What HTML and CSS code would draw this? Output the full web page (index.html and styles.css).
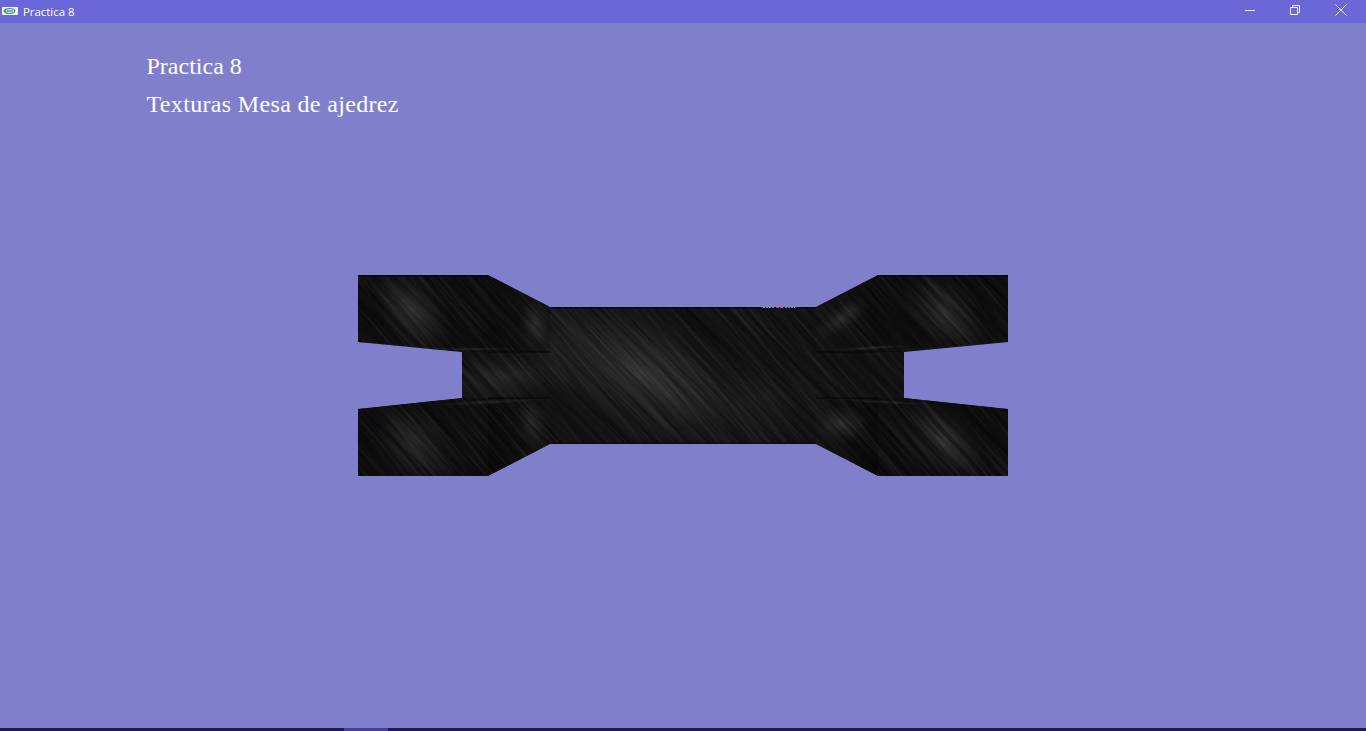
FILE: index.html
```html
<!DOCTYPE html>
<html lang="es">
<head>
<meta charset="utf-8">
<title>Practica 8</title>
<link rel="stylesheet" href="styles.css">
</head>
<body>
<div class="window">
  <header class="titlebar">
    <svg class="app-icon" viewBox="0 0 16 8" width="16" height="8" aria-hidden="true">
      <rect width="16" height="8" rx="1" fill="#f2f6f2"/>
      <ellipse cx="7.5" cy="4" rx="6" ry="3.1" fill="#3e9a8a"/>
      <ellipse cx="8" cy="4" rx="4" ry="1.9" fill="#dfe9ee"/>
      <path d="M5 4h6" stroke="#3c5a8c" stroke-width="1"/>
    </svg>
    <span class="app-title">Practica 8</span>
    <div class="controls">
      <span class="control"><svg viewBox="0 0 12 12" width="12" height="12"><path d="M1 6.5h10" class="glyph"/></svg></span>
      <span class="control"><svg viewBox="0 0 12 12" width="12" height="12"><path d="M1.5 3.5h7v7h-7zM3.5 3.5v-2h7v7h-2" class="glyph"/></svg></span>
      <span class="control"><svg viewBox="0 0 12 12" width="12" height="12"><path d="M.5 .5l11 11M11.5 .5l-11 11" class="glyph"/></svg></span>
    </div>
  </header>
  <main class="scene">
    <div class="caption">
      <p>Practica 8</p>
      <p class="caption-wide">Texturas Mesa de ajedrez</p>
    </div>
    <svg class="table" viewBox="358 275 650 201" width="650" height="201" aria-hidden="true">
      <defs>
        <filter id="grain" x="0" y="0" width="100%" height="100%" color-interpolation-filters="sRGB">
          <feTurbulence type="fractalNoise" baseFrequency="0.008 0.28" numOctaves="3" seed="7"/>
          <feColorMatrix type="matrix" values="0 0 0 0 0  0 0 0 0 0  0 0 0 0 0  2.4 0 0 0 -0.9"/>
        </filter>
        <filter id="grainLight" x="0" y="0" width="100%" height="100%" color-interpolation-filters="sRGB">
          <feTurbulence type="fractalNoise" baseFrequency="0.01 0.3" numOctaves="2" seed="21"/>
          <feColorMatrix type="matrix" values="0 0 0 0 1  0 0 0 0 1  0 0 0 0 1  1.8 0 0 0 -0.85"/>
        </filter>
        <radialGradient id="glow">
          <stop offset="0" stop-color="#363636" stop-opacity=".95"/>
          <stop offset=".5" stop-color="#2a2a2a" stop-opacity=".6"/>
          <stop offset="1" stop-color="#1c1c1c" stop-opacity="0"/>
        </radialGradient>
        <radialGradient id="glowSoft">
          <stop offset="0" stop-color="#303030" stop-opacity=".8"/>
          <stop offset="1" stop-color="#202020" stop-opacity="0"/>
        </radialGradient>
        <linearGradient id="sideL" x1="0" x2="1" y1="0" y2="0">
          <stop offset="0" stop-color="#0a0a0a"/>
          <stop offset="1" stop-color="#161616"/>
        </linearGradient>
        <linearGradient id="sideR" x1="1" x2="0" y1="0" y2="0">
          <stop offset="0" stop-color="#0a0a0a"/>
          <stop offset="1" stop-color="#171717"/>
        </linearGradient>
        <clipPath id="shape">
          <path d="M358 275H488L550 307H816L878 275H1008V342L904 352V398L1008 409V476H878L816 444H550L488 476H358V409L462 398V352L358 342Z"/>
        </clipPath>
      </defs>
      <g clip-path="url(#shape)">
        <rect class="base" x="358" y="275" width="650" height="201"/>
        <ellipse cx="640" cy="372" rx="160" ry="70" transform="rotate(25 640 372)" fill="url(#glow)"/>
        <ellipse cx="505" cy="376" rx="70" ry="26" fill="url(#glowSoft)"/>
        <ellipse cx="770" cy="395" rx="70" ry="45" fill="url(#glowSoft)" opacity=".3"/>

        <!-- upper left leg -->
        <path class="face" d="M358 275H488V350L358 342Z"/>
        <path fill="url(#sideL)" d="M488 275L550 307V352H462L488 350Z"/>
        <ellipse cx="412" cy="310" rx="55" ry="30" transform="rotate(50 412 310)" fill="url(#glow)"/>
        <ellipse cx="535" cy="325" rx="17" ry="28" fill="url(#glow)" opacity=".85"/>
        <ellipse cx="472" cy="349" rx="52" ry="2" fill="url(#glowSoft)"/>

        <!-- lower left leg -->
        <path class="face" d="M358 409L462 398H488V476H358Z"/>
        <path fill="url(#sideL)" d="M488 398H550V444L488 476Z"/>
        <ellipse cx="416" cy="442" rx="55" ry="30" transform="rotate(45 416 442)" fill="url(#glow)" opacity=".8"/>
        <ellipse cx="532" cy="423" rx="17" ry="28" transform="rotate(-12 532 423)" fill="url(#glow)" opacity=".75"/>
        <ellipse cx="490" cy="402" rx="60" ry="2.6" transform="rotate(-3 490 402)" fill="url(#glowSoft)"/>

        <!-- upper right leg -->
        <path class="face" d="M1008 275H878V350L1008 342Z"/>
        <path fill="url(#sideR)" d="M878 275L816 307V352H904L878 350Z"/>
        <ellipse cx="945" cy="312" rx="55" ry="30" transform="rotate(50 945 312)" fill="url(#glow)"/>
        <ellipse cx="842" cy="318" rx="36" ry="13" transform="rotate(-35 842 318)" fill="url(#glow)" opacity=".8"/>
        <ellipse cx="870" cy="348" rx="46" ry="2.2" transform="rotate(-3 870 348)" fill="url(#glow)" opacity=".8"/>

        <!-- lower right leg -->
        <path class="face" d="M1008 409L904 398H878V476H1008Z"/>
        <path fill="url(#sideR)" d="M878 398H816V444L878 476Z"/>
        <ellipse cx="945" cy="442" rx="55" ry="30" transform="rotate(45 945 442)" fill="url(#glow)"/>
        <ellipse cx="842" cy="424" rx="30" ry="20" fill="url(#glow)" opacity=".85"/>
        <ellipse cx="885" cy="402" rx="52" ry="2" transform="rotate(3 885 402)" fill="url(#glowSoft)"/>

        <!-- wood streaks: dark furrows and fine light fibres -->
        <rect class="furrows" x="-200" y="-200" width="1000" height="1000" filter="url(#grain)" transform="translate(683 -90) rotate(45)"/>
        <rect class="fibres" x="-200" y="-200" width="1000" height="1000" filter="url(#grainLight)" transform="translate(683 -90) rotate(50)"/>

        <path class="rim" d="M358 276H488M878 276H1008M550 308H816M550 443H816"/>
        <path class="ledge" d="M488 352H550M816 352H878M488 398H550M816 398H878"/>
      </g>
      <path class="spark" d="M763 307.5h12"/>
      <path class="spark-red" d="M776 307.5h8"/>
      <path class="spark" d="M785 307.5h10"/>
    </svg>
  </main>
  <footer class="taskstrip">
    <span class="task-active"></span>
  </footer>
</div>
</body>
</html>
```

FILE: styles.css
```css
* { box-sizing: border-box; }

html, body {
  margin: 0;
  height: 100%;
  overflow: hidden;
}

.window {
  display: flex;
  flex-direction: column;
  width: 1366px;
  height: 731px;
  background: #807fcc;
}

.titlebar {
  display: flex;
  align-items: center;
  flex: 0 0 23px;
  padding-left: 2px;
  background: #6a68d8;
  color: #fff;
  font: 11.4px/23px "Open Sans", "Noto Sans", sans-serif;
}

.app-icon { flex: none; margin-right: 5px; margin-top: -2px; }

.app-title { flex: 1; margin-top: -1px; }

.controls { display: flex; align-self: flex-start; padding-right: 2px; }

.control {
  display: flex;
  align-items: center;
  justify-content: center;
  width: 46px;
  height: 20px;
}

.control:first-child { width: 44px; }

.glyph { fill: none; stroke: #fff; stroke-width: 1; opacity: .9; }

.scene {
  flex: 1;
  display: grid;
  min-height: 0;
}

.scene > * { grid-area: 1 / 1; }

.caption {
  align-self: start;
  padding: 24px 0 0 146.5px;
  color: #fff;
  font: 24px/38px "Liberation Serif", "Times New Roman", serif;
}

.caption p { margin: 0; }

.caption-wide { letter-spacing: .34px; }

.table { place-self: center; display: block; }

.base { fill: #141414; }
.face { fill: #0f0f0f; }

.furrows { opacity: .45; }
.fibres { opacity: .1; }

.ledge { stroke: #090909; stroke-width: 1.5; opacity: .7; }
.rim { stroke: #0b0b0b; stroke-width: 2; opacity: .6; }

.spark { stroke: #8c8aa0; stroke-width: 1; stroke-dasharray: 2 1; }
.spark-red { stroke: #b04c60; stroke-width: 1; stroke-dasharray: 3 1; }

.taskstrip {
  display: flex;
  flex: 0 0 3px;
  padding-left: 344px;
  background: #1f1a4f;
}

.task-active {
  width: 44px;
  background: #45408f;
}
```
